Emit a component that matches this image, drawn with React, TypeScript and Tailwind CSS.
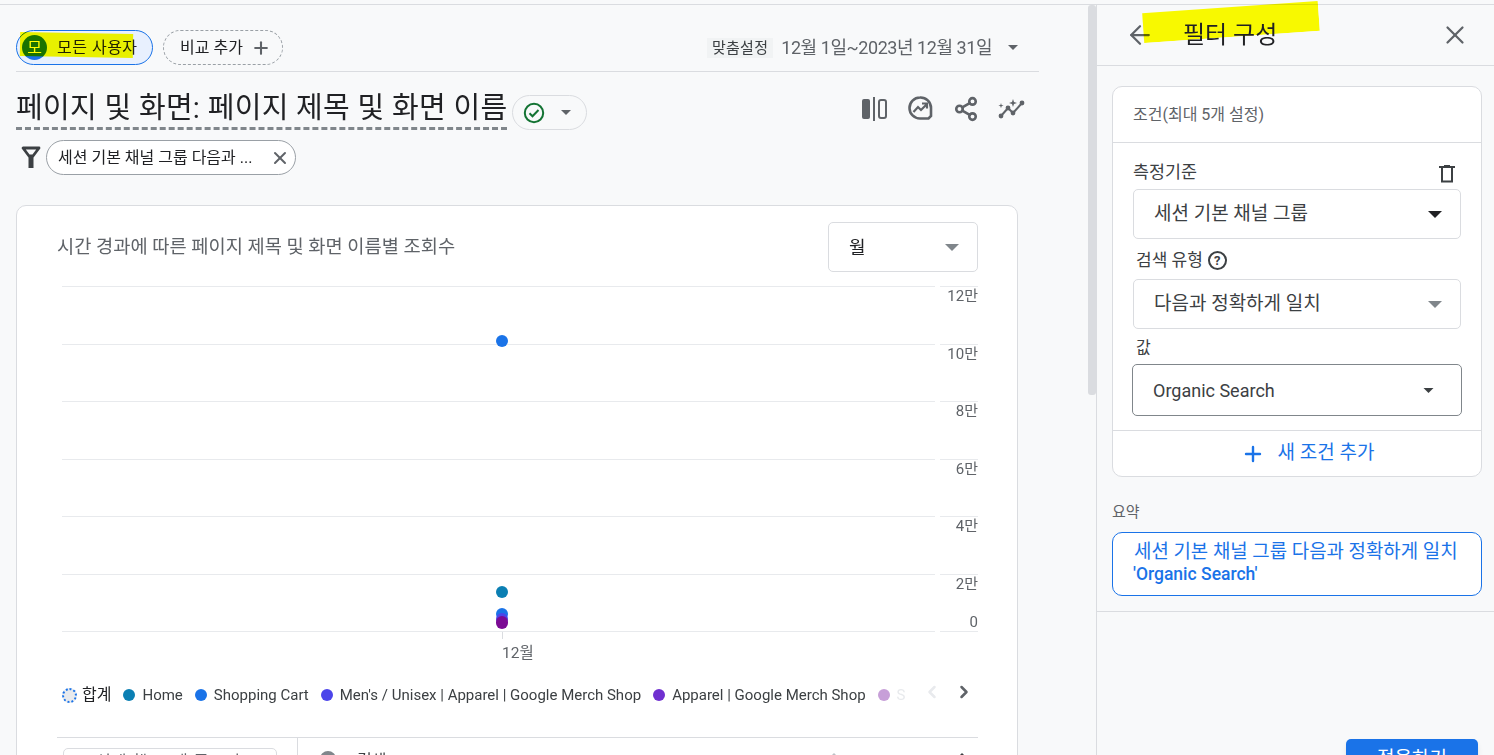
import React from 'react'
import { X, ArrowLeft, Plus, ChevronLeft, ChevronRight, Share2 } from 'lucide-react'

const sans = { fontFamily: 'Roboto, "Noto Sans CJK KR", sans-serif' }

const Caret = ({ className }: { className?: string }) => (
  <svg width="10" height="5" viewBox="0 0 10 5" className={className} fill="currentColor">
    <path d="M0 0h10L5 5z" />
  </svg>
)

const SelectBox = ({ label, strong, small }: { label: string; strong?: boolean; small?: boolean }) => (
  <div
    className={`flex items-center justify-between rounded-[5px] bg-white ${
      strong
        ? 'h-[52px] border border-[#80868b] pl-[20px] pr-[27px] mx-[-1px]'
        : 'h-[50px] border border-[#dadce0] pl-[20px] pr-[18px]'
    }`}
  >
    <span className={`text-[#3c4043] ${strong ? 'text-[18px]' : 'text-[19px]'}`}>{label}</span>
    <Caret className={small ? 'text-[#80868b] w-[14px] h-[7px]' : strong ? 'text-[#3c4043] w-[11px] h-[5px]' : 'text-[#202124] w-[14px] h-[7px]'} />
  </div>
)

const gridRows = [
  { label: '12만', h: 'h-[58px]' },
  { label: '10만', h: 'h-[57px]' },
  { label: '8만', h: 'h-[58px]' },
  { label: '6만', h: 'h-[57px]' },
  { label: '4만', h: 'h-[58px]' },
  { label: '2만', h: 'h-[57px]' },
]

const legend = [
  { color: 'bg-[#0b7fb3]', name: 'Home' },
  { color: 'bg-[#1a73e8]', name: 'Shopping Cart' },
  { color: 'bg-[#4c45ea]', name: "Men's / Unisex | Apparel | Google Merch Shop" },
  { color: 'bg-[#7030d0]', name: 'Apparel | Google Merch Shop' },
]

function Chart() {
  return (
    <div className="relative mt-[14px] ml-[5px] mr-[39px]">
      {gridRows.map((r) => (
        <div key={r.label} className={`${r.h} relative border-t border-[#e8eaed]`}>
          <span className="absolute right-0 top-0 bg-white text-[15px] leading-[18px] text-[#5f6368]">{r.label}</span>
          <span className="absolute right-[38px] -top-px h-px w-[5px] bg-white" />
        </div>
      ))}
      <div className="relative h-[20px] border-t border-[#e8eaed]">
        <span className="absolute right-0 -top-[19px] text-[15px] leading-[18px] text-[#5f6368]">0</span>
        <span className="absolute right-[38px] -top-px h-px w-[5px] bg-white" />
        <span className="absolute left-[440px] top-0 h-[7px] w-px bg-[#dadce0]" />
        <span className="absolute left-[440px] top-[11px] text-[15.500px] leading-[20px] text-[#5f6368]">12월</span>
      </div>
      <span className="absolute left-[434px] top-[49px] h-[12px] w-[12px] rounded-full bg-[#1a73e8]" />
      <span className="absolute left-[434px] top-[300px] h-[12px] w-[12px] rounded-full bg-[#0b7fb3]" />
      <span className="absolute left-[434px] top-[322px] h-[12px] w-[12px] rounded-full bg-[#1a73e8]" />
      <span className="absolute left-[434px] top-[327px] h-[12px] w-[12px] rounded-full bg-[#4c45ea]" />
      <span className="absolute left-[434px] top-[330px] h-[13px] w-[12px] rounded-full bg-[#7b0b94]" />
    </div>
  )
}

export default function App() {
  return (
    <div className="flex h-[755px] w-[1494px] overflow-hidden bg-[#f8f9fa] text-[#202124]" style={sans}>
      <div className="flex-1 min-w-0 flex flex-col">
        <div className="mt-[4px] h-[1px] bg-[#dadce0]" />
        <div className="flex flex-1 min-h-0">
          <main className="flex-1 min-w-0 pl-[16px] pr-[49px] overflow-hidden">
            {/* comparison chips + date */}
            <div className="flex items-center h-[67px] border-b border-[#dadce0] pt-[25px] pb-[6px] box-border">
              <div className="relative flex h-[35px] w-[137px] items-center rounded-full border border-[#1a73e8] bg-[#e8f0fe] pl-[5px]">
                <span className="relative flex h-[25px] w-[25px] items-center justify-center rounded-full bg-[#1a73e8] text-[16px] leading-none text-white">모</span>
                <span className="relative ml-[10px] text-[16px] tracking-[0.5px] whitespace-nowrap text-[#202124]">모든 사용자</span>
                <span className="absolute left-[3px] top-[2px] h-[24px] w-[113px] rotate-[1deg] bg-[#ffff00] mix-blend-multiply" />
              </div>
              <div className="ml-[10px] flex h-[35px] w-[120px] items-center rounded-full border border-dashed border-[#9aa0a6] pl-[16px]">
                <span className="text-[16px] whitespace-nowrap">비교 추가</span>
                <Plus className="ml-[8px] h-[20px] w-[20px] text-[#5f6368]" strokeWidth={2.5} />
              </div>
              <div className="ml-auto flex items-center pr-[21px]">
                <span className="bg-[#f1f3f4] px-[5px] text-[15px] tracking-[0.3px] leading-[20px] text-[#3c4043] whitespace-nowrap">맞춤설정</span>
                <span className="ml-[8px] text-[18px] tracking-[-0.45px] text-[#5f6368] whitespace-nowrap">12월 1일~2023년 12월 31일</span>
                <Caret className="ml-[16px] text-[#5f6368]" />
              </div>
            </div>
            {/* title row */}
            <div className="flex h-[68px] pt-[23px] items-start">
              <h1 className="mt-[-3px] h-[38px] border-b-[3px] border-dashed border-[#80868b] text-[29px] leading-[33px] tracking-[0.3px] text-[#202124] whitespace-nowrap font-normal">페이지 및 화면: 페이지 제목 및 화면 이름</h1>
              <div className="ml-[5px] flex h-[35px] w-[75px] shrink-0 items-center rounded-full border border-[#dadce0] pl-[10px]">
                <svg width="22" height="22" viewBox="0 0 22 22" fill="none">
                  <circle cx="11" cy="11" r="9.2" stroke="#137333" strokeWidth="2" />
                  <path d="M6.5 11.3l3 3 6-6.3" stroke="#137333" strokeWidth="2" />
                </svg>
                <Caret className="ml-[16px] text-[#5f6368]" />
              </div>
              <div className="ml-auto flex items-center gap-[19px] pr-[13px] text-[#5f6368]">
                <svg width="27" height="26" viewBox="0 0 27 26" fill="none">
                  <rect x="1" y="3" width="8" height="20" rx="2" fill="currentColor" />
                  <path d="M13 1v24" stroke="currentColor" strokeWidth="2" />
                  <rect x="18" y="4" width="7" height="18" rx="2" stroke="currentColor" strokeWidth="2" />
                </svg>
                <svg width="27" height="27" viewBox="0 0 27 27" fill="none" stroke="currentColor" strokeWidth="2.6">
                  <path d="M13 2.500a10.500 10.500 0 1 0 0 21h8.500l2.500-2.500v-8A10.500 10.500 0 0 0 13 2.500z" />
                  <path d="M6.500 17l4.500-5 3 3 6-6M15 8.500h5v5" strokeWidth="2.2" />
                </svg>
                <Share2 className="h-[26px] w-[26px]" strokeWidth={2.4} />
                <svg width="28" height="26" viewBox="0 0 28 26" fill="none">
                  <path d="M3 20l7-8 5 5 9-10" stroke="currentColor" strokeWidth="2" />
                  <circle cx="3" cy="20" r="2.400" fill="currentColor" />
                  <circle cx="10" cy="12" r="2.400" fill="currentColor" />
                  <circle cx="15" cy="17" r="2.400" fill="currentColor" />
                  <circle cx="24" cy="7" r="2.400" fill="currentColor" />
                  <path d="M15 3l1 3 3 1-3 1-1 3-1-3-3-1 3-1zM3 7l.6 2 2 .6-2 .6-.6 2-.6-2-2-.6 2-.6z" fill="currentColor" />
                </svg>
              </div>
            </div>
            {/* filter chip */}
            <div className="flex items-center h-[35px]">
              <svg width="20" height="23" viewBox="0 0 20 23" className="ml-[5px] text-[#3c4043]" fill="none">
                <path d="M2 2h16l-6 8H8z" stroke="currentColor" strokeWidth="2.800" strokeLinejoin="round" />
                <path d="M7.500 9.500h5V22h-5z" fill="currentColor" />
              </svg>
              <div className="ml-[5px] flex h-[35px] w-[250px] items-center rounded-full border border-[#9aa0a6] bg-white pl-[11px]">
                <span className="text-[16px] whitespace-nowrap">세션 기본 채널 그룹 다음과 ...</span>
                <X className="ml-auto mr-[5px] h-[20px] w-[20px] text-[#5f6368]" strokeWidth={2.4} />
              </div>
            </div>
            {/* report card */}
            <section className="mt-[30px] mr-[21px] h-[700px] rounded-[10px] border border-[#dadce0] bg-white pl-[40px] pr-0 pt-[16px]">
              <div className="flex items-center justify-between pr-[39px]">
                <h2 className="text-[18.700px] font-normal text-[#5f6368] whitespace-nowrap">시간 경과에 따른 페이지 제목 및 화면 이름별 조회수</h2>
                <div className="flex h-[50px] w-[150px] items-center justify-between rounded-[5px] border border-[#dadce0] pl-[20px] pr-[18px]">
                  <span className="text-[18px]">월</span>
                  <Caret className="h-[7px] w-[14px] text-[#80868b]" />
                </div>
              </div>
              <Chart />
              {/* legend */}
              <div className="relative mt-[34px] flex h-[20px] items-center mr-[39px] whitespace-nowrap text-[15px] text-[#3c4043] overflow-hidden">
                <span className="ml-[5px] h-[15px] w-[15px] shrink-0 rounded-full border-2 border-dotted border-[#1a73e8] bg-[#e8eaed]" />
                <span className="ml-[5px] text-[16px] text-[#202124]">합계</span>
                {legend.map((l) => (
                  <React.Fragment key={l.name}>
                    <span className={`ml-[12px] h-[12px] w-[12px] shrink-0 rounded-full ${l.color}`} />
                    <span className="ml-[7px]">{l.name}</span>
                  </React.Fragment>
                ))}
                <span className="ml-[12px] h-[12px] w-[12px] shrink-0 rounded-full bg-[#c79fd8]" />
                <span className="ml-[7px] text-[#e8eaed]">S</span>
                <span className="absolute right-0 top-0 h-[20px] w-[72px] bg-white" />
                <ChevronLeft className="absolute right-[36px] top-[-3px] h-[20px] w-[20px] text-[#e8eaed]" strokeWidth={3} />
                <ChevronRight className="absolute right-[4px] top-[-3px] h-[20px] w-[20px] text-[#5f6368]" strokeWidth={3} />
              </div>
              {/* table top */}
              <div className="mt-[32px] mr-[39px] flex border-t border-[#dadce0]">
                <div className="h-[40px] w-[241px] border-r border-[#dadce0] pt-[10px]">
                  <div className="ml-[6px] h-[30px] w-[214px] rounded-[5px] border border-[#dadce0] pl-[32px] pt-[3px] text-[16px] leading-[20px] tracking-[1px] whitespace-nowrap text-[#5f6368]">선택 행 10개 플로팅</div>
                </div>
                <div className="relative flex flex-1 items-start pl-[22px] pt-[13px]">
                  <span className="h-[16px] w-[16px] rounded-full bg-[#80868b]" />
                  <span className="ml-[21px] text-[16px] leading-[20px] text-[#3c4043]">검색</span>
                  <Caret className="absolute left-[533px] top-[15px] rotate-180 w-[6px] h-[3px] text-[#bdc1c6]" />
                  <Caret className="absolute left-[660px] top-[15px] rotate-180 w-[8px] h-[4px] text-[#3c4043]" />
                </div>
              </div>
            </section>
          </main>
          {/* scroll bar */}
          <div className="w-[8px] bg-[#f8f9fa]">
            <div className="h-[390px] w-[8px] rounded-[3px] bg-[#dadce0]" />
          </div>
        </div>
      </div>
      {/* filter panel */}
      <aside className="relative mt-[4px] w-[398px] shrink-0 border-l border-[#dadce0] border-t bg-[#f8f9fa]">
        <header className="relative flex h-[61px] items-center border-b border-[#dadce0] pl-[28px] pr-[24px]">
          <ArrowLeft className="h-[30px] w-[30px] text-[#5f6368]" strokeWidth={1.800} />
          <span className="absolute left-[46px] top-[2px] h-[30px] w-[176px] -rotate-[4deg] bg-[#ffff00] mix-blend-multiply" />
          <span className="relative ml-[28px] text-[24px] text-[#202124] whitespace-nowrap">필터 구성</span>
          <X className="ml-auto h-[30px] w-[30px] text-[#5f6368]" strokeWidth={1.800} />
        </header>
        <div className="ml-[15px] mr-[12px] mt-[20px] rounded-[10px] border border-[#dadce0] bg-white">
          <div className="flex h-[56px] items-center border-b border-[#dadce0] pl-[20px] text-[16px] text-[#5f6368]">조건(최대 5개 설정)</div>
          <div className="px-[20px] pt-[17px] pb-[14px] border-b border-[#dadce0]">
            <div className="flex h-[29px] items-start justify-between pr-[6px]">
              <span className="text-[17.400px] leading-[24px] text-[#3c4043]">측정기준</span>
              <svg width="16" height="18" viewBox="0 0 16 18" fill="none" className="mt-[5px] text-[#3c4043]">
                <path d="M0 2h16M3 2v14.500h10V2" stroke="currentColor" strokeWidth="2" />
                <path d="M5 1h6" stroke="currentColor" strokeWidth="2" />
              </svg>
            </div>
            <SelectBox label="세션 기본 채널 그룹" />
            <div className="flex h-[40px] items-center pl-[3px] pt-[3px]">
              <span className="text-[17px] text-[#3c4043]">검색 유형</span>
              <span className="ml-[5px] flex h-[19px] w-[19px] items-center justify-center rounded-full border-2 border-[#3c4043] text-[13px] font-bold leading-none text-[#3c4043]">?</span>
            </div>
            <SelectBox label="다음과 정확하게 일치" small />
            <div className="flex h-[35px] items-center pl-[3px] pt-[2px] text-[16px] text-[#3c4043]">값</div>
            <SelectBox label="Organic Search" strong />
          </div>
          <div className="flex h-[45px] items-center justify-center pl-[21px] text-[19px] text-[#1a73e8]">
            <Plus className="h-[24px] w-[24px]" strokeWidth={2.400} />
            <span className="ml-[13px]">새 조건 추가</span>
          </div>
        </div>
        <div className="border-b border-[#dadce0] pl-[15px] pr-[12px] pt-[25px] pb-[15px]">
          <div className="text-[15px] leading-[20px] text-[#5f6368]">요약</div>
          <div className="mt-[10px] h-[64px] rounded-[10px] border border-[#1a73e8] bg-white pl-[21px] pr-[10px] pt-[7px] text-[18.900px] leading-[23px] text-[#1a73e8]">
            <div className="whitespace-nowrap">세션 기본 채널 그룹 다음과 정확하게 일치</div>
            <div className="font-medium ml-[-1px] text-[17.500px]">'Organic Search'</div>
          </div>
        </div>
        <button className="absolute left-[249px] top-[734px] flex h-[50px] w-[132px] items-start justify-center rounded-[5px] bg-[#1a73e8] pt-[9px] text-[19px] leading-[22px] text-white shadow-md">적용하기</button>
      </aside>
    </div>
  )
}
